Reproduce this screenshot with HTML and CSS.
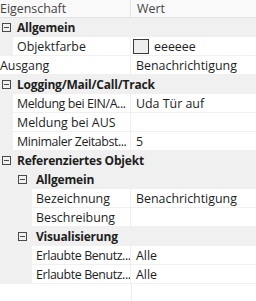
FILE: index.html
```html
<!DOCTYPE html>
<html>
<head>
<meta charset="utf-8">
<link rel="stylesheet" href="styles.css">
</head>
<body>
<div class="grid">
  <div class="row header"><div class="name">Eigenschaft</div><div class="val">Wert</div></div>

  <div class="row cat"><span class="box"></span><span class="ctext">Allgemein</span></div>
  <div class="row prop l1"><div class="margin"></div><div class="name">Objektfarbe</div><div class="val"><span class="swatch"></span>eeeeee</div></div>
  <div class="row prop l0"><div class="name">Ausgang</div><div class="val">Benachrichtigung</div></div>

  <div class="row cat"><span class="box"></span><span class="ctext">Logging/Mail/Call/Track</span></div>
  <div class="row prop l1"><div class="margin"></div><div class="name trunc">Meldung bei EIN/A...</div><div class="val">Uda Tür auf</div></div>
  <div class="row prop l1"><div class="margin"></div><div class="name">Meldung bei AUS</div><div class="val"></div></div>
  <div class="row prop l1"><div class="margin"></div><div class="name trunc">Minimaler Zeitabst...</div><div class="val">5</div></div>

  <div class="row cat"><span class="box"></span><span class="ctext">Referenziertes Objekt</span></div>
  <div class="row cat sub"><span class="box"></span><span class="ctext">Allgemein</span></div>
  <div class="row prop l2"><div class="margin"></div><div class="name">Bezeichnung</div><div class="val">Benachrichtigung</div></div>
  <div class="row prop l2"><div class="margin"></div><div class="name">Beschreibung</div><div class="val"></div></div>
  <div class="row cat sub"><span class="box"></span><span class="ctext">Visualisierung</span></div>
  <div class="row prop l2"><div class="margin"></div><div class="name trunc">Erlaubte Benutz...</div><div class="val">Alle</div></div>
  <div class="row prop l2"><div class="margin"></div><div class="name trunc">Erlaubte Benutz...</div><div class="val">Alle</div></div>
  <div class="filler"><div class="fname"></div><div class="fval"></div></div>
</div>
</body>
</html>
```
FILE: styles.css
```css
html, body {
  margin: 0;
  padding: 0;
  background: #ffffff;
}
body {
  font-family: "Open Sans", "Noto Sans", sans-serif;
  font-size: 12.4px;
  color: #1e1e1e;
  width: 256px;
  height: 301px;
  overflow: hidden;
}
.grid {
  display: flex;
  flex-direction: column;
  height: 301px;
}
.row {
  display: flex;
  height: 19px;
  align-items: stretch;
  box-sizing: border-box;
  flex: none;
}
.row .name, .row .val {
  display: flex;
  align-items: center;
  white-space: nowrap;
  overflow: hidden;
}
.header {
  height: 18px;
  background: #f9f9f9;
  border-bottom: 1px solid #e3e3e3;
  color: #444444;
}
.header .name {
  width: 131px;
  border-right: 1px solid #e3e3e3;
  box-sizing: border-box;
}
.header .val {
  padding-left: 6px;
}
.cat {
  background: #f0f0f0;
  border-bottom: 1px solid #f0f0f0;
  align-items: center;
  font-weight: 700;
  font-size: 12px;
  letter-spacing: -0.2px;
  color: #1e1e1e;
}
.box {
  width: 7px;
  height: 7px;
  border: 1px solid #4a4a4a;
  margin-left: 2px;
  margin-right: 6px;
  position: relative;
  flex: none;
}
.cat.sub .box {
  margin-left: 18px;
  margin-right: 9px;
}
.box::after {
  content: "";
  position: absolute;
  left: 1px;
  right: 1px;
  top: 3px;
  height: 1px;
  background: #4a4a4a;
}
.prop {
  border-bottom: 1px solid #f0f0f0;
}
.prop .margin {
  flex: none;
  background: #f0f0f0;
}
.prop.l1 .margin { width: 13px; }
.prop.l2 .margin { width: 32px; }
.prop .name {
  padding-left: 4px;
  box-sizing: border-box;
  border-right: 1px solid #f0f0f0;
}
.prop .name.trunc {
  letter-spacing: -0.4px;
}
.prop.l0 .name { width: 131px; padding-left: 0; }
.prop.l1 .name { width: 118px; }
.prop.l2 .name { width: 99px; }
.prop .val {
  flex: 1;
  padding-left: 5px;
}
.swatch {
  width: 14px;
  height: 13px;
  border: 1px solid #3a3a3a;
  background: #eeeeee;
  margin-left: -3px;
  margin-right: 5px;
  flex: none;
}
.filler {
  flex: 1;
  display: flex;
}
.fname {
  width: 131px;
  border-right: 1px solid #f0f0f0;
}
```
